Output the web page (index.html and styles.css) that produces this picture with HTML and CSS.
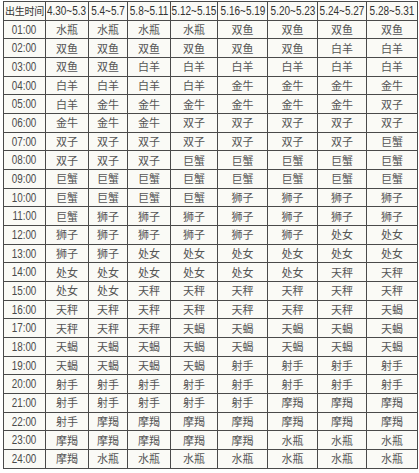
FILE: index.html
```html
<!DOCTYPE html>
<html lang="zh">
<head>
<meta charset="utf-8">
<title>星座时间表</title>
<link rel="stylesheet" href="styles.css">
</head>
<body>
<table class="chart">
<colgroup>
<col class="c-time"><col class="c1"><col class="c2"><col class="c3"><col class="c4"><col class="c5"><col class="c6"><col class="c7"><col class="c8">
</colgroup>
<thead>
<tr><th class="cjk">出生时间</th><th><span class="n">4.30~5.3</span></th><th><span class="n">5.4~5.7</span></th><th><span class="n">5.8~5.11</span></th><th><span class="n">5.12~5.15</span></th><th><span class="n">5.16~5.19</span></th><th><span class="n">5.20~5.23</span></th><th><span class="n">5.24~5.27</span></th><th><span class="n">5.28~5.31</span></th></tr>
</thead>
<tbody>
<tr><td class="t"><span class="n">01:00</span></td><td>水瓶</td><td>水瓶</td><td>水瓶</td><td>水瓶</td><td>双鱼</td><td>双鱼</td><td>双鱼</td><td>双鱼</td></tr>
<tr><td class="t"><span class="n">02:00</span></td><td>双鱼</td><td>双鱼</td><td>双鱼</td><td>双鱼</td><td>双鱼</td><td>双鱼</td><td>白羊</td><td>白羊</td></tr>
<tr><td class="t"><span class="n">03:00</span></td><td>双鱼</td><td>双鱼</td><td>白羊</td><td>白羊</td><td>白羊</td><td>白羊</td><td>白羊</td><td>白羊</td></tr>
<tr><td class="t"><span class="n">04:00</span></td><td>白羊</td><td>白羊</td><td>白羊</td><td>白羊</td><td>金牛</td><td>金牛</td><td>金牛</td><td>金牛</td></tr>
<tr><td class="t"><span class="n">05:00</span></td><td>白羊</td><td>金牛</td><td>金牛</td><td>金牛</td><td>金牛</td><td>金牛</td><td>金牛</td><td>双子</td></tr>
<tr><td class="t"><span class="n">06:00</span></td><td>金牛</td><td>金牛</td><td>金牛</td><td>双子</td><td>双子</td><td>双子</td><td>双子</td><td>双子</td></tr>
<tr><td class="t"><span class="n">07:00</span></td><td>双子</td><td>双子</td><td>双子</td><td>双子</td><td>双子</td><td>双子</td><td>双子</td><td>巨蟹</td></tr>
<tr><td class="t"><span class="n">08:00</span></td><td>双子</td><td>双子</td><td>双子</td><td>巨蟹</td><td>巨蟹</td><td>巨蟹</td><td>巨蟹</td><td>巨蟹</td></tr>
<tr><td class="t"><span class="n">09:00</span></td><td>巨蟹</td><td>巨蟹</td><td>巨蟹</td><td>巨蟹</td><td>巨蟹</td><td>巨蟹</td><td>巨蟹</td><td>巨蟹</td></tr>
<tr><td class="t"><span class="n">10:00</span></td><td>巨蟹</td><td>巨蟹</td><td>巨蟹</td><td>巨蟹</td><td>狮子</td><td>狮子</td><td>狮子</td><td>狮子</td></tr>
<tr><td class="t"><span class="n">11:00</span></td><td>巨蟹</td><td>狮子</td><td>狮子</td><td>狮子</td><td>狮子</td><td>狮子</td><td>狮子</td><td>狮子</td></tr>
<tr><td class="t"><span class="n">12:00</span></td><td>狮子</td><td>狮子</td><td>狮子</td><td>狮子</td><td>狮子</td><td>狮子</td><td>处女</td><td>处女</td></tr>
<tr><td class="t"><span class="n">13:00</span></td><td>狮子</td><td>狮子</td><td>处女</td><td>处女</td><td>处女</td><td>处女</td><td>处女</td><td>处女</td></tr>
<tr><td class="t"><span class="n">14:00</span></td><td>处女</td><td>处女</td><td>处女</td><td>处女</td><td>处女</td><td>处女</td><td>天秤</td><td>天秤</td></tr>
<tr><td class="t"><span class="n">15:00</span></td><td>处女</td><td>处女</td><td>天秤</td><td>天秤</td><td>天秤</td><td>天秤</td><td>天秤</td><td>天秤</td></tr>
<tr><td class="t"><span class="n">16:00</span></td><td>天秤</td><td>天秤</td><td>天秤</td><td>天秤</td><td>天秤</td><td>天秤</td><td>天秤</td><td>天蝎</td></tr>
<tr><td class="t"><span class="n">17:00</span></td><td>天秤</td><td>天秤</td><td>天秤</td><td>天蝎</td><td>天蝎</td><td>天蝎</td><td>天蝎</td><td>天蝎</td></tr>
<tr><td class="t"><span class="n">18:00</span></td><td>天蝎</td><td>天蝎</td><td>天蝎</td><td>天蝎</td><td>天蝎</td><td>天蝎</td><td>天蝎</td><td>天蝎</td></tr>
<tr><td class="t"><span class="n">19:00</span></td><td>天蝎</td><td>天蝎</td><td>天蝎</td><td>天蝎</td><td>射手</td><td>射手</td><td>射手</td><td>射手</td></tr>
<tr><td class="t"><span class="n">20:00</span></td><td>射手</td><td>射手</td><td>射手</td><td>射手</td><td>射手</td><td>射手</td><td>射手</td><td>射手</td></tr>
<tr><td class="t"><span class="n">21:00</span></td><td>射手</td><td>射手</td><td>射手</td><td>射手</td><td>射手</td><td>摩羯</td><td>摩羯</td><td>摩羯</td></tr>
<tr><td class="t"><span class="n">22:00</span></td><td>射手</td><td>摩羯</td><td>摩羯</td><td>摩羯</td><td>摩羯</td><td>摩羯</td><td>摩羯</td><td>摩羯</td></tr>
<tr><td class="t"><span class="n">23:00</span></td><td>摩羯</td><td>摩羯</td><td>摩羯</td><td>摩羯</td><td>摩羯</td><td>水瓶</td><td>水瓶</td><td>水瓶</td></tr>
<tr><td class="t"><span class="n">24:00</span></td><td>摩羯</td><td>水瓶</td><td>水瓶</td><td>水瓶</td><td>水瓶</td><td>水瓶</td><td>水瓶</td><td>水瓶</td></tr>
</tbody>
</table>
</body>
</html>
```

FILE: styles.css
```css
html, body {
  margin: 0;
  background: #ffffff;
}
body {
  padding: 1px 0 0 3px;
}
.chart {
  border-collapse: collapse;
  table-layout: fixed;
  width: 414px;
  background: #fafaf6;
  font-family: "Noto Sans CJK SC", sans-serif;
  font-size: 11px;
  color: #555555;
}
.c-time { width: 42px; }
.c1 { width: 43px; }
.c2 { width: 39px; }
.c3 { width: 43px; }
.c4 { width: 47px; }
.c5 { width: 50px; }
.c6 { width: 50px; }
.c7 { width: 49px; }
.c8 { width: 51px; }
.chart tr {
  height: 18.68px;
}
.chart th,
.chart td {
  border: 1px solid #4a4a4a;
  padding: 0;
  text-align: center;
  vertical-align: middle;
  line-height: 1;
  white-space: nowrap;
}
.chart th {
  font-family: "Liberation Sans", Arial, sans-serif;
  font-weight: normal;
  font-size: 12.5px;
  color: #333333;
}
.n {
  display: inline-block;
  transform: scaleX(0.82);
  transform-origin: center;
}
.chart th .n {
  transform: scaleX(0.8);
  margin: 0 -12px;
}
.chart th.cjk {
  font-family: "Noto Sans CJK SC", sans-serif;
  font-size: 10px;
  letter-spacing: -0.2px;
}
.chart td.t {
  font-family: "Liberation Sans", Arial, sans-serif;
  font-size: 12px;
  color: #4a4a4a;
}
```
